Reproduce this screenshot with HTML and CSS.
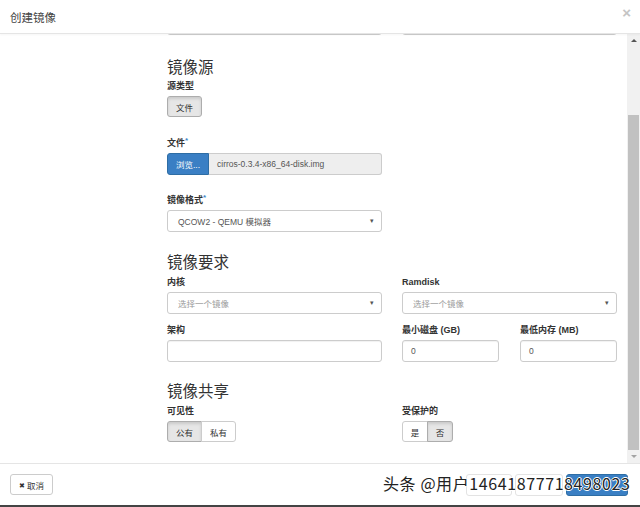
FILE: index.html
```html
<!DOCTYPE html>
<html lang="zh">
<head>
<meta charset="utf-8">
<title>创建镜像</title>
<link rel="stylesheet" href="styles.css">
</head>
<body>
<div class="modal">
  <div class="modal-header">
    <h4 class="modal-title">创建镜像</h4>
    <span class="close">×</span>
  </div>
  <div class="modal-main">
    <div class="modal-body">
      <div class="scroll-content">
        <div class="row first-row">
          <div class="field"><div class="form-control"></div></div>
          <div class="field"><div class="form-control"></div></div>
        </div>

        <h3 class="section-title">镜像源</h3>
        <label class="lbl mt5">源类型</label>
        <div class="btn-group">
          <span class="btn active">文件</span>
        </div>

        <label class="lbl mt20">文件<span class="req">*</span></label>
        <div class="file-input">
          <span class="browse">浏览...</span>
          <span class="file-name">cirros-0.3.4-x86_64-disk.img</span>
        </div>

        <label class="lbl mt19">镜像格式<span class="req">*</span></label>
        <div class="select single">
          <span>QCOW2 - QEMU 模拟器</span><span class="caret">▾</span>
        </div>

        <h3 class="section-title mt20">镜像要求</h3>
        <div class="row mt6">
          <div class="field">
            <label class="lbl">内核</label>
            <div class="select placeholder"><span>选择一个镜像</span><span class="caret">▾</span></div>
          </div>
          <div class="field">
            <label class="lbl">Ramdisk</label>
            <div class="select placeholder"><span>选择一个镜像</span><span class="caret">▾</span></div>
          </div>
        </div>
        <div class="row mt10">
          <div class="field">
            <label class="lbl">架构</label>
            <div class="form-control"></div>
          </div>
          <div class="field split">
            <div class="sub">
              <label class="lbl">最小磁盘 (GB)</label>
              <div class="form-control">0</div>
            </div>
            <div class="sub">
              <label class="lbl">最低内存 (MB)</label>
              <div class="form-control">0</div>
            </div>
          </div>
        </div>

        <h3 class="section-title mt19">镜像共享</h3>
        <div class="row mt6">
          <div class="field">
            <label class="lbl">可见性</label>
            <div class="btn-group">
              <span class="btn active">公有</span><span class="btn">私有</span>
            </div>
          </div>
          <div class="field">
            <label class="lbl">受保护的</label>
            <div class="btn-group">
              <span class="btn narrow">是</span><span class="btn narrow active">否</span>
            </div>
          </div>
        </div>
      </div>
    </div>
    <div class="scrollbar">
      <span class="arrow up"></span>
      <div class="track"><div class="thumb"></div></div>
      <span class="arrow down"></span>
    </div>
  </div>
  <div class="modal-footer">
    <span class="btn cancel"><span class="x">✖</span> 取消</span>
    <div class="footer-right">
      <span class="btn fbtn back" aria-label="返回"></span>
      <span class="btn fbtn next" aria-label="下一步"></span>
      <span class="btn fbtn primary" aria-label="创建镜像"></span>
    </div>
    <span class="watermark">头条 @用户14641877718498023</span>
  </div>
</div>
<div class="edge"></div>
</body>
</html>
```

FILE: styles.css
```css
* { box-sizing: border-box; }
html, body { margin: 0; padding: 0; }
body {
  width: 640px;
  height: 507px;
  overflow: hidden;
  background: #fff;
  font-family: "Liberation Sans", "Noto Sans CJK SC", sans-serif;
  color: #333;
  font-size: 9px;
}
.modal {
  height: 505px;
  display: flex;
  flex-direction: column;
  background: #fff;
}
.modal-header {
  height: 34px;
  flex: none;
  border-bottom: 1px solid #e5e5e5;
  display: flex;
  align-items: center;
  justify-content: space-between;
  padding: 0 10px 0 10px;
  position: relative;
  z-index: 2;
  box-shadow: 0 1px 2px rgba(0,0,0,0.04);
}
.modal-title {
  margin: 0;
  font-size: 11.5px;
  font-weight: 400;
  color: #444;
  font-family: "Noto Sans CJK SC", sans-serif;
}
.close {
  font-size: 15px;
  font-weight: 700;
  color: #c4c4c4;
  line-height: 1;
  margin-top: -9px;
  margin-right: -1px;
}
.modal-main {
  flex: 1;
  display: flex;
  min-height: 0;
}
.modal-body {
  flex: 1;
  overflow: hidden;
  padding-left: 167px;
}
.scroll-content { width: 450px; }
.row {
  display: grid;
  grid-template-columns: 215px 215px;
  column-gap: 20px;
}
.first-row { margin-top: -21px; }
.field { display: flex; flex-direction: column; }
.split {
  display: grid;
  grid-template-columns: 97px 97px;
  column-gap: 21px;
}
.sub { display: flex; flex-direction: column; }
.section-title {
  margin: 22px 0 0 0;
  font-size: 15.5px;
  line-height: 18px;
  font-weight: 400;
  color: #333;
  font-family: "Noto Sans CJK SC", sans-serif;
}
.lbl {
  display: block;
  font-weight: 700;
  font-size: 9px;
  line-height: 12px;
  margin-bottom: 4px;
  color: #333;
}
.req { color: #3a87c8; vertical-align: top; font-size: 8px; line-height: 8px; }
.mt5 { margin-top: 5px; }
.mt6 { margin-top: 6px; }
.mt10 { margin-top: 10px; }
.mt19 { margin-top: 19px; }
.mt20 { margin-top: 20px; }
.form-control {
  height: 22px;
  border: 1px solid #ccc;
  border-radius: 3px;
  background: #fff;
  box-shadow: inset 0 1px 1px rgba(0,0,0,0.06);
  padding: 0 8px;
  display: flex;
  align-items: center;
  font-size: 8.5px;
  color: #555;
}
.btn-group { display: flex; }
.btn {
  display: inline-flex;
  align-items: center;
  justify-content: center;
  height: 21px;
  padding: 0 7px;
  border: 1px solid #ccc;
  background: #fff;
  color: #333;
  font-size: 8.5px;
  font-family: "Noto Sans CJK SC", sans-serif;
  border-radius: 3px;
}
.btn-group .btn { width: 35px; }
.btn-group .btn.narrow { width: 26px; }
.btn-group .btn + .btn { margin-left: -1px; border-top-left-radius: 0; border-bottom-left-radius: 0; }
.btn-group .btn:not(:last-child) { border-top-right-radius: 0; border-bottom-right-radius: 0; }
.btn.active {
  background: #e6e6e6;
  border-color: #adadad;
  box-shadow: inset 0 2px 3px rgba(0,0,0,0.12);
}
.file-input {
  display: flex;
  width: 215px;
  height: 22px;
}
.browse {
  width: 42px;
  background: #3a7fc4;
  border: 1px solid #2e6da4;
  color: #fff;
  border-radius: 3px 0 0 3px;
  display: flex;
  align-items: center;
  justify-content: center;
  font-size: 8.5px;
}
.file-name {
  flex: 1;
  background: #eee;
  border: 1px solid #ccc;
  border-left: none;
  border-radius: 0 3px 3px 0;
  display: flex;
  align-items: center;
  padding-left: 8px;
  color: #555;
  font-size: 8.5px;
}
.select {
  height: 22px;
  border: 1px solid #ccc;
  border-radius: 3px;
  display: flex;
  align-items: center;
  justify-content: space-between;
  padding: 0 7px 0 10px;
  color: #555;
  font-size: 8.5px;
}
.select.single { width: 215px; }
.select.placeholder { color: #999; }
.caret { font-size: 7px; color: #555; }
.scrollbar {
  width: 13px;
  flex: none;
  background: #f1f1f1;
  display: flex;
  flex-direction: column;
  align-items: center;
  padding-left: 1px;
}
.arrow {
  width: 0; height: 0;
  border-left: 3px solid transparent;
  border-right: 3px solid transparent;
  margin: 5px 0;
}
.arrow.up { border-bottom: 3px solid #555; }
.arrow.down { border-top: 3px solid #a3a3a3; }
.track { flex: 1; width: 100%; display: flex; flex-direction: column; justify-content: flex-end; padding: 0 1px 0 0; }
.thumb { height: 335px; background: #c1c1c1; width: 100%; }
.modal-footer {
  flex: none;
  height: 42px;
  border-top: 1px solid #e5e5e5;
  display: flex;
  align-items: center;
  justify-content: space-between;
  padding: 0 12px 0 10px;
  position: relative;
}
.cancel { width: 43px; height: 21px; font-size: 8.5px; padding: 0; }
.cancel .x { font-size: 7px; margin-right: 2px; color: #333; }
.footer-right { display: flex; gap: 3px; }
.fbtn { height: 22px; border-color: #e3e3e3; }
.back { width: 46px; }
.next { width: 48px; }
.primary { width: 62px; background: #3a7fc4; border-color: #2e6da4; }
.watermark {
  position: absolute;
  left: 383px;
  top: 8px;
  font-family: "Noto Sans CJK SC", sans-serif;
  font-size: 16px;
  line-height: 22px;
  color: #222;
  letter-spacing: 0.6px;
  text-shadow: -1px 0 #fff, 1px 0 #fff, 0 -1px #fff, 0 1px #fff;
}
.edge { height: 2px; background: #444; }
```
